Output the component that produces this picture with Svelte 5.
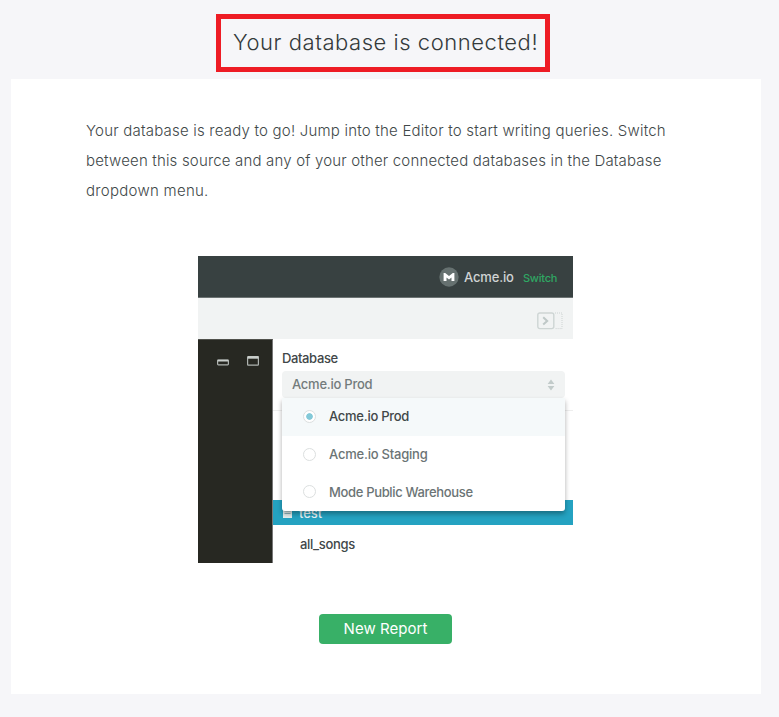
<script>
  const lines = [
    { text: 'Your database is ready to go! Jump into the Editor to start writing queries. Switch', cls: 'l1' },
    { text: 'between this source and any of your other connected databases in the Database', cls: 'l2' },
    { text: 'dropdown menu.', cls: 'l3' }
  ];
  const sources = [
    { name: 'Acme.io Prod', cls: 's1', selected: true },
    { name: 'Acme.io Staging', cls: 's2', selected: false },
    { name: 'Mode Public Warehouse', cls: 's3', selected: false }
  ];
</script>

<div class="page">
  <header><h1><span>Your database is connected!</span></h1></header>
  <main>
    <p class="intro">
      {#each lines as line}
        <span class={line.cls}>{line.text}</span>{' '}
      {/each}
    </p>

    <section class="preview">
      <div class="topbar">
        <svg class="logo" width="20" height="20" viewBox="0 0 20 20">
          <circle cx="10" cy="10" r="9.7" fill="#667170" />
          <path d="M4.6 14V5.9h1.6L10 9l3.8-3.1h1.6V14h-2.9v-3.4L10 12.4l-2.5-1.8V14z" fill="#fff" />
        </svg>
        <span class="org">Acme.io</span>
        <span class="switch">Switch</span>
      </div>
      <div class="toolbar">
        <svg width="26" height="18" viewBox="0 0 26 18" fill="none">
          <rect x="0.8" y="1" width="16" height="15.6" rx="2" stroke="#ced5d4" stroke-width="1.4" />
          <path d="M6.2 5.2l4 3.7-4 3.7" stroke="#bfc8c7" stroke-width="2" />
          <path d="M18 1h7v15.6h-7" stroke="#cdd3d2" stroke-dasharray="1 1" />
        </svg>
      </div>
      <div class="workspace">
        <aside>
          <svg width="12" height="10" viewBox="0 0 12 10" fill="none">
            <rect x="0.6" y="4.2" width="10.8" height="4.6" rx="0.7" stroke="#aeb3b0" stroke-width="1.2" />
            <path d="M.6 4.6h10.8" stroke="#c9cecb" stroke-width="1.8" />
          </svg>
          <svg width="12" height="10" viewBox="0 0 12 10" fill="none">
            <rect x="0.6" y="0.6" width="10.8" height="8.6" rx="0.7" stroke="#aeb3b0" stroke-width="1.2" />
            <path d="M.6 1.4h10.8" stroke="#c9cecb" stroke-width="2.6" />
          </svg>
        </aside>
        <div class="panel">
          <div class="label"><span>Database</span></div>
          <div class="dropdown">
            <div class="select">
              <span>Acme.io Prod</span>
              <svg width="8" height="12" viewBox="0 0 8 12" fill="#c2cbca">
                <path d="M.6 5L4 .6 7.4 5zM.6 7L4 11.4 7.4 7z" />
              </svg>
            </div>
            <ul class="menu">
              {#each sources as source}
                <li class:selected={source.selected}>
                  <i class="radio"></i><span class={source.cls}>{source.name}</span>
                </li>
              {/each}
            </ul>
          </div>
          <div class="divider"></div>
          <div class="table active">
            <svg width="9" height="11" viewBox="0 0 9 11">
              <path d="M0 0h9v11H0z" fill="#e4eeee" />
              <path d="M1.5 4h6M1.5 6.5h6" stroke="#8bb5bd" />
            </svg>
            <span>test</span>
          </div>
          <div class="table plain"><span>all_songs</span></div>
        </div>
      </div>
    </section>

    <button>New Report</button>
  </main>
</div>

<style>
  :global(body) { margin: 0; background: #f6f6f9; }
  .page {
    box-sizing: border-box;
    width: 779px;
    height: 717px;
    padding: 14px 18px 0 11px;
    background: #f6f6f9;
    font-family: Inter, 'Liberation Sans', sans-serif;
    color: #343a3b;
    overflow: hidden;
  }
  header { height: 65px; padding-left: 205px; }
  h1 {
    box-sizing: border-box;
    width: 334px;
    height: 58px;
    margin: 0;
    padding-left: 12px;
    border: 5px solid #ee1c25;
    font-size: 22px;
    font-weight: 300;
    line-height: 47px;
    letter-spacing: 0.54px;
    white-space: nowrap;
  }
  main {
    box-sizing: border-box;
    height: 615px;
    padding-top: 37px;
    background: #fff;
    display: flex;
    flex-direction: column;
    align-items: center;
  }
  .intro {
    box-sizing: border-box;
    width: 600px;
    height: 140px;
    margin: 0;
    font-size: 15px;
    font-weight: 300;
    line-height: 30px;
    color: #414849;
    white-space: nowrap;
  }
  .intro span { display: block; width: max-content; letter-spacing: 0.21px; }
  .intro .l2 { letter-spacing: 0.175px; }
  .intro .l3 { letter-spacing: 0.28px; }
  .preview { width: 375px; height: 307px; margin-right: 1px; overflow: hidden; font-weight: 500; }
  .topbar {
    box-sizing: border-box;
    height: 42px;
    padding: 0 16px 0 241px;
    display: flex;
    align-items: center;
    background: #384141;
    border-bottom: 1px solid #6c7373;
    white-space: nowrap;
  }
  .logo { flex: none; margin-top: 1px; }
  .org { flex: none; width: 59px; margin-left: 5px; font-size: 13px; letter-spacing: -0.15px; color: #d0d4d4; padding-top: 1px; }
  .switch { font-size: 11px; letter-spacing: -0.25px; color: #2fa763; padding-top: 3px; }
  .toolbar {
    box-sizing: border-box;
    height: 41px;
    padding: 14px 10px 0 0;
    display: flex;
    justify-content: flex-end;
    background: #f1f3f3;
  }
  .workspace { display: flex; height: 224px; background: #fff; }
  aside {
    box-sizing: border-box;
    width: 75px;
    padding: 16px 0 0 19px;
    display: flex;
    gap: 18px;
    background: #272822;
    border-right: 1px solid #777;
    border-top: 1px solid #50514c;
  }
  .panel { width: 300px; }
  .label { height: 32px; padding-left: 9px; font-size: 13px; letter-spacing: -0.38px; line-height: 39px; color: #414748; }
  .dropdown { position: relative; z-index: 1; width: 283px; height: 39px; margin-left: 9px; }
  .select {
    box-sizing: border-box;
    height: 27px;
    padding: 0 10px 0 10px;
    display: flex;
    align-items: center;
    justify-content: space-between;
    border-radius: 4px;
    background: #f1f3f3;
    color: #737b7c;
    font-size: 13px;
    letter-spacing: -0.25px;
  }
  .select span { padding-bottom: 2px; }
  .menu {
    position: absolute;
    top: 27px;
    left: 0;
    width: 283px;
    margin: 0;
    padding: 0;
    list-style: none;
    background: #fff;
    border-radius: 0 0 3px 3px;
    box-shadow: 0 3px 5px rgba(0, 0, 0, 0.32);
    overflow: hidden;
  }
  li {
    box-sizing: border-box;
    height: 37.5px;
    padding-left: 21px;
    display: flex;
    align-items: center;
    gap: 13px;
    font-size: 13px;
    color: #6b7475;
    white-space: nowrap;
  }
  li.selected { background: #f5f9fa; color: #414748; }
  .s1 { letter-spacing: -0.27px; padding-bottom: 2px; }
  .s2 { letter-spacing: -0.22px; }
  .s3 { letter-spacing: -0.34px; }
  .radio {
    box-sizing: border-box;
    width: 13px;
    height: 13px;
    border: 1px solid #dcdfdf;
    border-radius: 50%;
    background: #fff;
  }
  .selected .radio { background: radial-gradient(circle, #83c9d8 0 2.9px, #fff 3.7px); }
  .divider { height: 90px; box-sizing: border-box; border-top: 1px solid #eee; }
  .table { display: flex; font-size: 13px; letter-spacing: -0.3px; }
  .active {
    box-sizing: border-box;
    height: 25px;
    padding: 7px 0 0 10px;
    gap: 7px;
    background: #24a2c1;
    color: #e6f3f5;
    line-height: 12px;
  }
  .active span { letter-spacing: -0.1px; }
  .plain { padding-left: 27px; line-height: 39px; color: #414748; }
  button {
    width: 133px;
    height: 30px;
    margin: 51px 1px 0 0;
    padding: 0;
    border: 0;
    border-radius: 4px;
    background: #38b067;
    color: #fff;
    font: 400 15px/30px Inter, sans-serif;
    letter-spacing: 0.05px;
  }
</style>
